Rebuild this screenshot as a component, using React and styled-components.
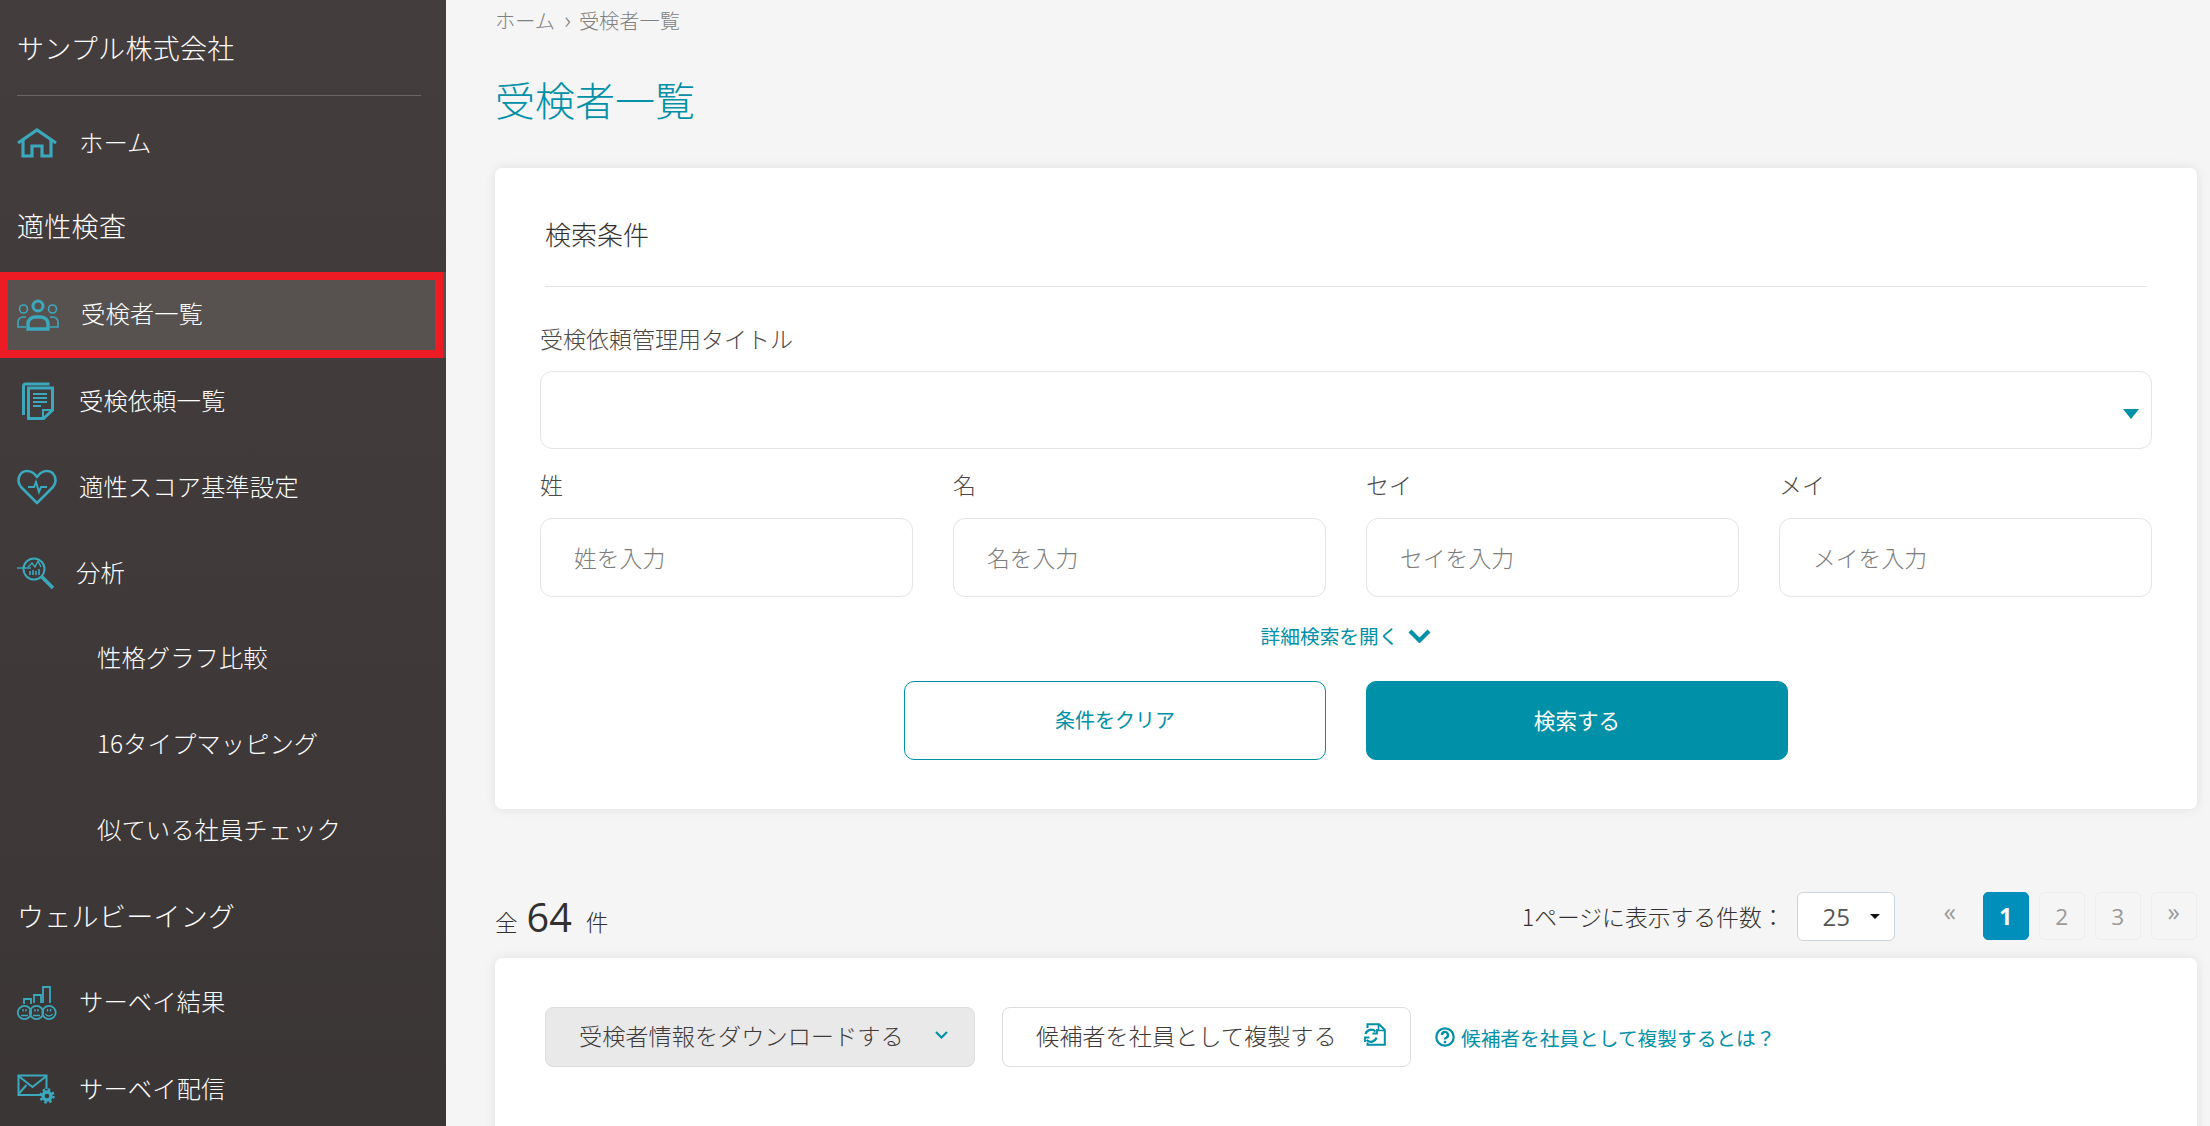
import React from 'react';
import styled, {createGlobalStyle} from 'styled-components';

const TEAL = '#0090a8';
const ICON = '#3ba9bd';

const GlobalStyle = createGlobalStyle`
  html, body {
    margin: 0;
    padding: 0;
    height: 100%;
    overflow: hidden;
    background: #f5f5f5;
  }
  body {
    font-family: "Noto Sans CJK JP", "Open Sans", sans-serif;
    font-weight: 300;
    color: #333030;
  }
  * { box-sizing: border-box; }
`

const Layout = styled.div`
  display: flex;
  height: 1126px;
  overflow: hidden;
`
const Sidebar = styled.nav`
  flex: 0 0 446px;
  display: flex;
  flex-direction: column;
  background: linear-gradient(#443d3d, #3b3636);
  color: #fff;
  font-weight: 400;
  & > * { flex-shrink: 0; }
`
const Company = styled.div`
  height: 95px;
  padding: 0 25px 0 17px;
  display: flex;
  align-items: center;
  font-size: 27px;
  letter-spacing: .3px;
  font-weight: 300;
`
const Divider = styled.div`
  height: 1px;
  margin: 0 25px 0 17px;
  background: #6b6665;
`
const Row = styled.a`
  height: ${p => p.$h || 86}px;
  display: flex;
  align-items: center;
  font-size: 24.4px;
  font-weight: 300;
  color: #fff;
  padding-left: ${p => p.$indent || 17}px;
  padding-bottom: ${p => p.$lift || 3}px;
`
const ActiveRow = styled(Row)`
  width: 443px;
  background: #575250;
  border: 8px solid #ed1c24;
  padding-left: 9px;
  box-shadow: 3px 0 0 #575250;
`
const Heading = styled.div`
  height: ${p => p.$h}px;
  display: flex;
  align-items: center;
  padding-left: 17px;
  padding-bottom: ${p => p.$lift}px;
  font-size: 27px;
  font-weight: 300;
  letter-spacing: .3px;
`
const IconBox = styled.span`
  width: ${p => p.$w || 62}px;
  flex: none;
  display: flex;
  align-items: center;
  margin-top: ${p => p.$down || 3}px;
  svg { display: block; }
`

const Main = styled.main`
  flex: 1;
  min-width: 0;
  padding: 0 13px 0 49px;
`
const Breadcrumb = styled.div`
  height: 40px;
  display: flex;
  align-items: center;
  font-size: 20.2px;
  color: #808080;
`
const Crumb = styled.span`
  margin-right: 6px;
`
const CrumbSep = styled(Crumb)`
  font-size: 24px;
  line-height: 1;
  padding-bottom: 3px;
  margin: 0 8px 0 3px;
`
const Title = styled.h1`
  margin: 0;
  height: 128px;
  padding-top: 3px;
  font-size: 40px;
  font-weight: 300;
  line-height: 112px;
  color: ${TEAL};
`
const Card = styled.section`
  background: #fff;
  border-radius: 7px;
  box-shadow: 0 0 12px rgba(0, 0, 0, .09);
`
const SearchCard = styled(Card)`
  height: 641px;
  padding: 0 45px;
`
const CardTitle = styled.h2`
  margin: 0 5px 0 5px;
  height: 119px;
  line-height: 132px;
  font-size: 26px;
  font-weight: 300;
  border-bottom: 1.4px solid #e4e4e4;
`
const FieldLabel = styled.label`
  display: block;
  height: 50px;
  line-height: 50px;
  font-size: 23px;
  color: #4b4746;
`
const TitleLabel = styled(FieldLabel)`
  height: 64px;
  padding-top: 6px;
  margin-top: 20px;
`
const SelectBox = styled.div`
  height: 78px;
  position: relative;
  border: 1.4px solid #e4e4e4;
  border-radius: 12px;
`
const SelectArrow = styled.span`
  position: absolute;
  right: 12px;
  top: 37px;
  border-top: 10px solid ${TEAL};
  border-left: 8px solid transparent;
  border-right: 8px solid transparent;
`
const NameGrid = styled.div`
  display: grid;
  grid-template-columns: repeat(4, 373px);
  column-gap: 40px;
  margin-top: 10px;
`
const TextInput = styled.input`
  display: block;
  width: 100%;
  height: 79px;
  margin-top: 9px;
  padding: 0 33px;
  border: 1.4px solid #e4e4e4;
  border-radius: 12px;
  background: #fff;
  outline: none;
  font-family: inherit;
  font-weight: 300;
  font-size: 22.8px;
  &::placeholder { color: #7c7c7c; opacity: 1; }
`
const DetailToggle = styled.div`
  height: 84px;
  padding-bottom: 7px;
  display: flex;
  align-items: center;
  justify-content: center;
  gap: 10px;
  font-size: 19.7px;
  font-weight: 400;
  color: ${TEAL};
`
const ButtonRow = styled.div`
  display: flex;
  justify-content: center;
  gap: 40px;
`
const OutlineButton = styled.button`
  width: 422px;
  height: 79px;
  padding: 0 0 3px;
  border: 1.4px solid ${TEAL};
  border-radius: 10px;
  background: #fff;
  color: ${TEAL};
  font-family: inherit;
  font-weight: 400;
  font-size: 20px;
`
const SolidButton = styled(OutlineButton)`
  background: ${TEAL};
  color: #fff;
  font-size: 21.600px;
`

const ListHeader = styled.div`
  height: 149px;
  padding-top: 83px;
  display: flex;
  justify-content: space-between;
`
const Total = styled.div`
  display: flex;
  align-items: center;
  height: 58px;
  font-size: 22.6px;
`
const TotalNum = styled.span`
  margin: 0 14px 0 9px;
  font-family: "Open Sans", sans-serif;
  font-weight: 400;
  font-size: 39.6px;
  line-height: 1;
  padding-bottom: 6px;
`
const PagerArea = styled.div`
  display: flex;
  align-items: flex-start;
  height: 50px;
`
const PerPageLabel = styled.span`
  line-height: 50px;
  font-size: 22.8px;
  margin-right: 12px;
`
const PerPageSelect = styled.div`
  width: 98px;
  height: 49px;
  border: 1.4px solid #ccd3da;
  border-radius: 6px;
  background: #fff;
  display: flex;
  align-items: center;
  padding-left: 25px;
  font-family: "Open Sans", sans-serif;
  font-weight: 400;
  font-size: 24px;
  color: #555;
  margin-right: 32px;
`
const Caret = styled.span`
  margin-left: 20px;
  border-top: 5px solid #111;
  border-left: 5px solid transparent;
  border-right: 5px solid transparent;
`
const Pager = styled.div`
  display: flex;
  gap: 9.5px;
`
const PageBtn = styled.span`
  width: 46.5px;
  height: 48px;
  display: flex;
  align-items: center;
  justify-content: center;
  border-radius: 5px;
  font-family: "Open Sans", sans-serif;
  font-size: 22.6px;
  font-weight: ${p => p.$active ? 700 : 400};
  color: ${p => p.$active ? '#fff' : '#9a9a9a'};
  background: ${p => p.$active ? '#008fbb' : '#f5f5f5'};
  border: 1.4px solid ${p => p.$active ? '#008fbb' : p.$plain ? 'transparent' : '#eeeeee'};
`
const ArrowBtn = styled(PageBtn)`
  padding-bottom: 11px;
  font-size: 25px;
`
const ResultCard = styled(Card)`
  height: 300px;
  padding: 49px 45px 0 50px;
  display: flex;
  align-items: flex-start;
  gap: 27px;
`
const ToolButton = styled.button`
  height: 60px;
  width: ${p => p.$w}px;
  display: flex;
  align-items: center;
  justify-content: space-between;
  padding: 0 ${p => p.$pr}px 5px 33px;
  border: 1.4px solid #ddd;
  border-radius: 8px;
  background: ${p => p.$grey ? '#e9e9e9' : '#fff'};
  color: #3e3a39;
  font-family: inherit;
  font-weight: 300;
  font-size: 23.2px;
  svg { flex: none; }
`
const HelpLink = styled.a`
  height: 60px;
  margin-left: -3px;
  display: flex;
  align-items: center;
  gap: 6px;
  font-size: 19.7px;
  font-weight: 400;
  color: ${TEAL};
`

const HomeIcon = () => (
    <svg width="40" height="30" viewBox="0 0 40 30" fill="none" stroke={ICON} strokeWidth="3.2">
        <path d="M1 15 20 2l19 13" strokeLinejoin="miter"/>
        <path d="M6 12v16h9V18h10v10h9V12"/>
    </svg>
)
const PeopleIcon = () => (
    <svg width="42" height="32" viewBox="0 0 42 32" fill="none" stroke={ICON}>
        <circle cx="21" cy="7" r="5" strokeWidth="3"/>
        <path d="M11 30v-5a7 7 0 0 1 7-7h6a7 7 0 0 1 7 7v5z" strokeWidth="3.4"/>
        <circle cx="6.5" cy="10" r="4" strokeWidth="1.6"/>
        <circle cx="35.5" cy="10" r="4" strokeWidth="1.6"/>
        <path d="M9 28H1v-5a5 5 0 0 1 5-5h3M33 28h8v-5a5 5 0 0 0-5-5h-3" strokeWidth="1.6"/>
    </svg>
)
const DocsIcon = () => (
    <svg width="32" height="38" viewBox="0 0 32 38" fill="none" stroke={ICON}>
        <path d="M1.5 33V4a2 2 0 0 1 2-2h24" strokeWidth="3"/>
        <path d="M6.500 36.500V6h24v22l-9 8.500z" strokeWidth="3"/>
        <path d="M21 36v-8h9" strokeWidth="2"/>
        <path d="M11 12h14M11 16h14M11 20h14M11 24h8" strokeWidth="1.800"/>
    </svg>
)
const HeartIcon = () => (
    <svg width="40" height="36" viewBox="0 0 40 36" fill="none" stroke={ICON}>
        <path d="M20 34 4 18C-1 12 2 2 10 2c5 0 8 3 10 6 2-3 5-6 10-6 8 0 11 10 6 16z" strokeWidth="2.6" strokeLinejoin="round"/>
        <path d="M11 18h6l2-5 3 10 2-5h6" strokeWidth="2"/>
    </svg>
)
const AnalysisIcon = () => (
    <svg width="38" height="33" viewBox="0 0 38 33" fill="none" stroke={ICON}>
        <circle cx="17" cy="12" r="10.5" strokeWidth="2"/>
        <path d="m25 20 11 11" strokeWidth="3.6"/>
        <path d="M0 11h14" strokeWidth="1.4"/>
        <path d="m11 10 4-4 3 4 3-6 3 6" strokeWidth="1.400"/>
        <path d="M13 18v-4M16 18v-5M19 18v-4M22 18v-6" strokeWidth="1.600"/>
    </svg>
)
const SurveyResultIcon = () => (
    <svg width="40" height="35" viewBox="0 0 40 35" fill="none" stroke={ICON}>
        <path d="M7 18v-5h7v5M17 17V9h7v8M26 17V1h7v16" strokeWidth="1.8"/>
        <circle cx="7.5" cy="26.5" r="6.7" strokeWidth="1.8"/>
        <circle cx="19.5" cy="26.5" r="6.7" strokeWidth="1.8"/>
        <circle cx="32" cy="26.5" r="6.7" strokeWidth="1.8"/>
        <path d="M4 29.500h7M16 29.500h7M28.500 28a4 4 0 0 0 7 0M6 23v2.500M9 23v2.500M18 23v2.500M21 23v2.500M30.500 23v2.500M33.500 23v2.500" strokeWidth="1.4"/>
    </svg>
)
const SurveySendIcon = () => (
    <svg width="38" height="30" viewBox="0 0 38 30" fill="none" stroke={ICON}>
        <path d="M25 21H1.500V1.500h28V15" strokeWidth="2"/>
        <path d="m1.500 2 14 11 14-11M1.500 20l8-9" strokeWidth="2"/>
        <circle cx="30" cy="22" r="4" strokeWidth="3.4"/>
        <circle cx="30" cy="22" r="6.500" strokeWidth="2.400" strokeDasharray="2.500 2.600"/>
    </svg>
)
const BigChevron = () => (
    <svg width="23" height="14" viewBox="0 0 23 14" fill="none" stroke={TEAL} strokeWidth="4.200">
        <path d="m2 2 9.500 9.500L21 2"/>
    </svg>
)
const SmallChevron = () => (
    <svg width="13" height="8" viewBox="0 0 13 8" fill="none" stroke={TEAL} strokeWidth="2.200">
        <path d="m1 1 5.500 5.500L12 1"/>
    </svg>
)
const CopyIcon = () => (
    <svg width="23" height="23" viewBox="0 0 23 23" fill="none" stroke={TEAL}>
        <path d="M4.500 5V1.200h11.500l5.800 5.800v14.800H4.500V19.500" strokeWidth="2"/>
        <path d="M15.500 1.500V7.500h6" strokeWidth="1.600"/>
        <path d="M2.500 11a6 6 0 0 1 10-2.500M13.500 14.500a6 6 0 0 1-10 2.500" strokeWidth="2.200"/>
        <path d="M14 6v4.500H9.500M2 19v-4.500h4.500" strokeWidth="1.800"/>
    </svg>
)
const HelpIcon = () => (
    <svg width="20" height="20" viewBox="0 0 20 20" fill="none" stroke={TEAL}>
        <circle cx="10" cy="10" r="8.700" strokeWidth="2.200"/>
        <path d="M7 8a3 3 0 1 1 4.500 2.500C10.500 11 10 11.500 10 12.500" strokeWidth="2.400"/>
        <path d="M10 13.800v2.400" strokeWidth="2.400"/>
    </svg>
)

const App = () => {
    return (
        <Layout>
            <GlobalStyle/>
            <Sidebar>
                <Company>サンプル株式会社</Company>
                <Divider/>
                <Row $h={94}><IconBox><HomeIcon/></IconBox>ホーム</Row>
                <Heading $h={82} $lift={12}>適性検査</Heading>
                <ActiveRow $lift={6}><IconBox $w={64} $down={6}><PeopleIcon/></IconBox>受検者一覧</ActiveRow>
                <Row $indent={22}><IconBox $w={57}><DocsIcon/></IconBox>受検依頼一覧</Row>
                <Row><IconBox><HeartIcon/></IconBox>適性スコア基準設定</Row>
                <Row><IconBox $w={59}><AnalysisIcon/></IconBox>分析</Row>
                <Row $indent={97} $lift={6}>性格グラフ比較</Row>
                <Row $indent={97} $lift={6}>16タイプマッピング</Row>
                <Row $indent={97} $lift={6}>似ている社員チェック</Row>
                <Heading $h={86} $lift={4}>ウェルビーイング</Heading>
                <Row $lift={6}><IconBox $down={6}><SurveyResultIcon/></IconBox>サーベイ結果</Row>
                <Row><IconBox><SurveySendIcon/></IconBox>サーベイ配信</Row>
            </Sidebar>
            <Main>
                <Breadcrumb><Crumb>ホーム</Crumb><CrumbSep>›</CrumbSep>受検者一覧</Breadcrumb>
                <Title>受検者一覧</Title>
                <SearchCard>
                    <CardTitle>検索条件</CardTitle>
                    <TitleLabel>受検依頼管理用タイトル</TitleLabel>
                    <SelectBox><SelectArrow/></SelectBox>
                    <NameGrid>
                        <div><FieldLabel>姓</FieldLabel><TextInput placeholder="姓を入力"/></div>
                        <div><FieldLabel>名</FieldLabel><TextInput placeholder="名を入力"/></div>
                        <div><FieldLabel>セイ</FieldLabel><TextInput placeholder="セイを入力"/></div>
                        <div><FieldLabel>メイ</FieldLabel><TextInput placeholder="メイを入力"/></div>
                    </NameGrid>
                    <DetailToggle>詳細検索を開く<BigChevron/></DetailToggle>
                    <ButtonRow>
                        <OutlineButton>条件をクリア</OutlineButton>
                        <SolidButton>検索する</SolidButton>
                    </ButtonRow>
                </SearchCard>
                <ListHeader>
                    <Total>全<TotalNum>64</TotalNum>件</Total>
                    <PagerArea>
                        <PerPageLabel>1ページに表示する件数：</PerPageLabel>
                        <PerPageSelect>25<Caret/></PerPageSelect>
                        <Pager>
                            <ArrowBtn $plain>«</ArrowBtn>
                            <PageBtn $active>1</PageBtn>
                            <PageBtn>2</PageBtn>
                            <PageBtn>3</PageBtn>
                            <ArrowBtn>»</ArrowBtn>
                        </Pager>
                    </PagerArea>
                </ListHeader>
                <ResultCard>
                    <ToolButton $grey $w={430} $pr={26}>受検者情報をダウンロードする<SmallChevron/></ToolButton>
                    <ToolButton $w={409} $pr={24}>候補者を社員として複製する<CopyIcon/></ToolButton>
                    <HelpLink><HelpIcon/>候補者を社員として複製するとは？</HelpLink>
                </ResultCard>
            </Main>
        </Layout>
    );
};

export default App;
